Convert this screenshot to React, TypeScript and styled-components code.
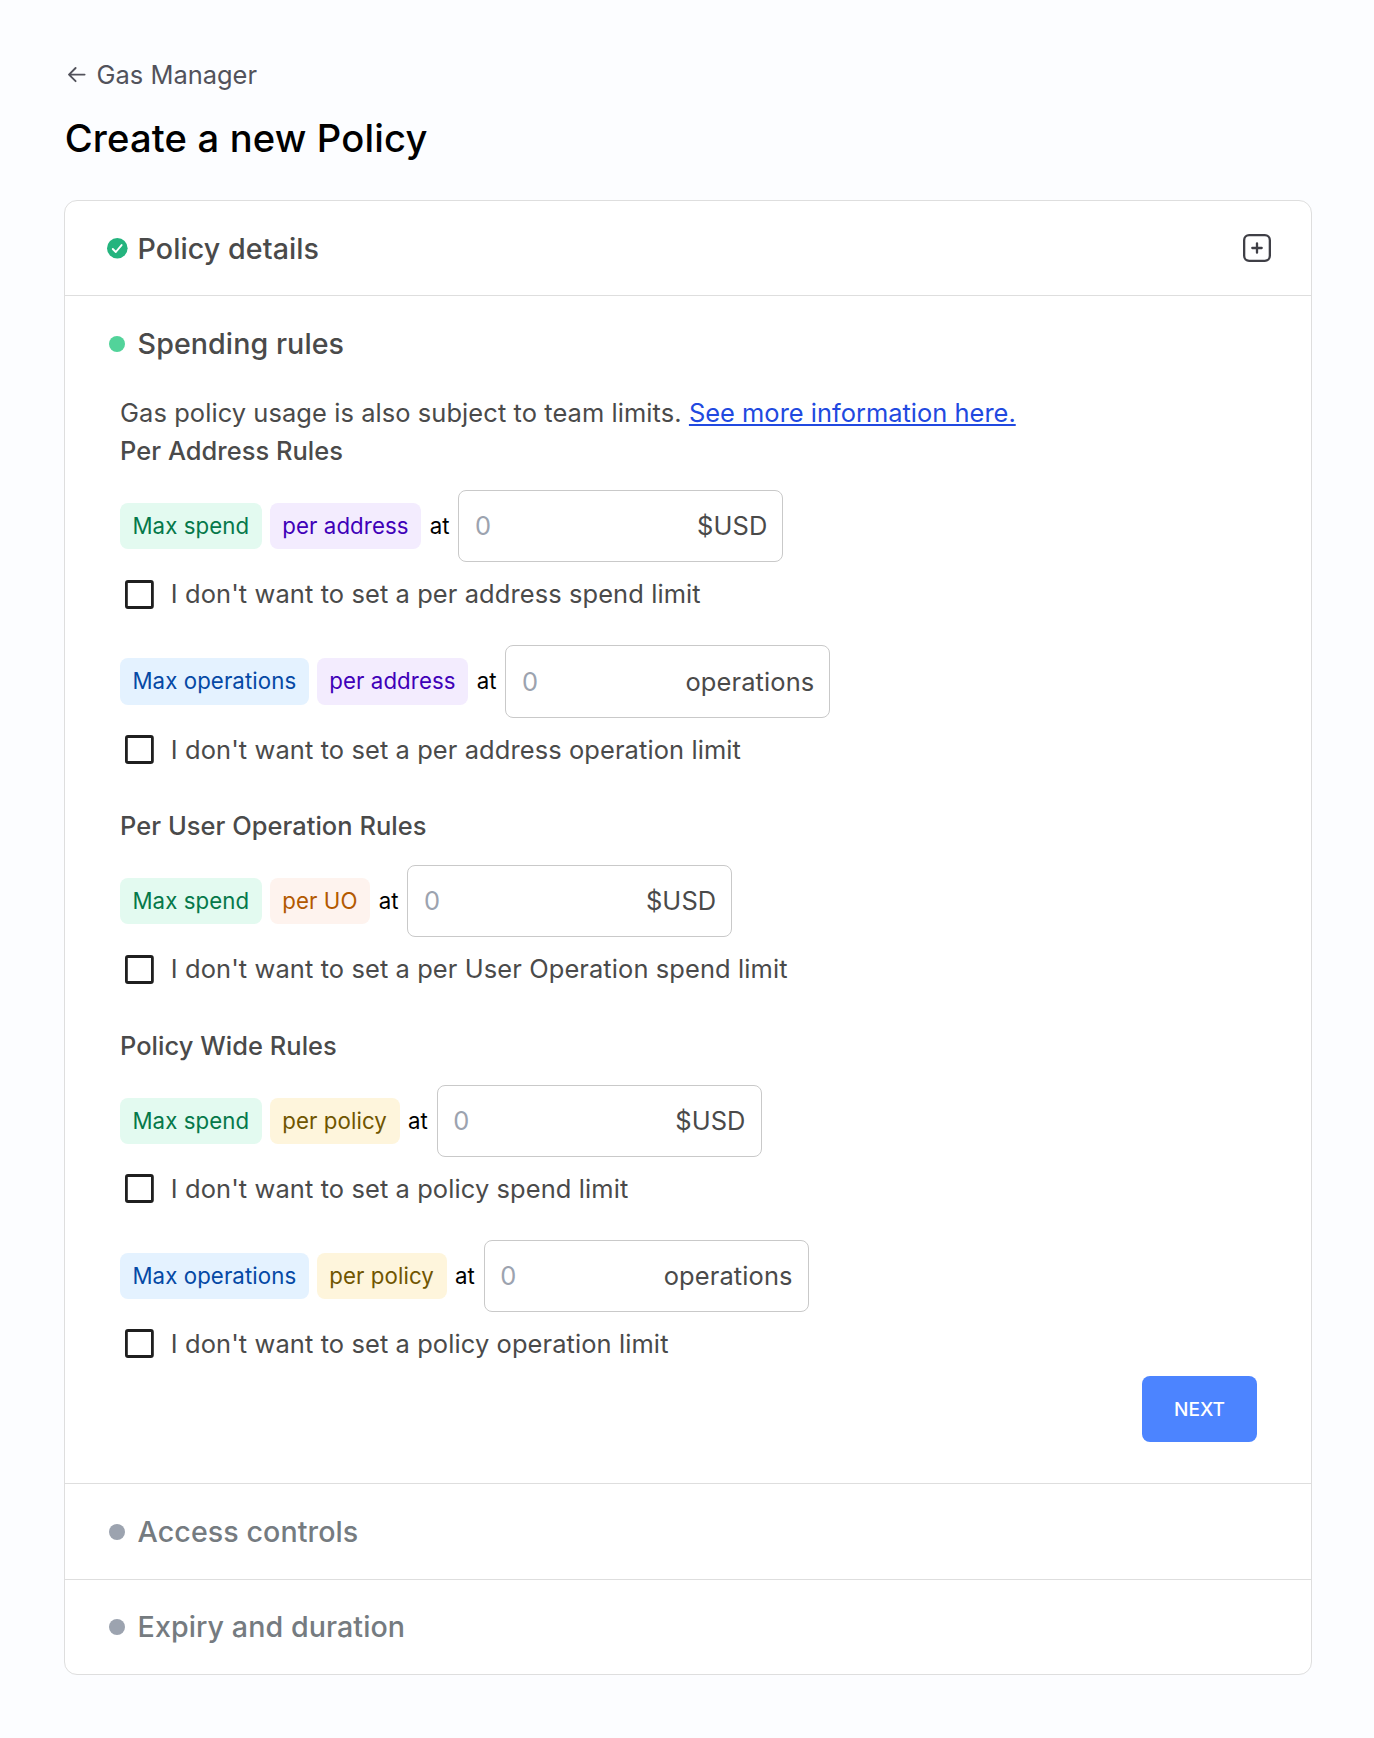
import React from "react";
import styled, { createGlobalStyle } from "styled-components";

const GlobalStyle = createGlobalStyle`
  *, *::before, *::after { box-sizing: border-box; }
  body {
    margin: 0;
    background: #fcfdff;
    font-family: Inter, "Liberation Sans", sans-serif;
    color: #4a4a4a;
  }
`;

const Page = styled.main`
  min-height: 1738px;
  padding: 55px 62px 63px 64px;
`;

const BackLink = styled.a`
  display: flex;
  align-items: center;
  gap: 9.6px;
  height: 38px;
  padding-left: 3px;
  color: #52525b;
  font-size: 25.44px;
  text-decoration: none;
`;

const PageTitle = styled.h1`
  margin: 18px 0 35px;
  padding-left: 0.7px;
  height: 54px;
  line-height: 54px;
  color: #000;
  font-size: 38.16px;
  font-weight: 500;
  letter-spacing: 0.16px;
`;

const Card = styled.div`
  border: 1px solid #dedede;
  border-radius: 13px;
  background: #fff;
`;

const Section = styled.section`
  & + & {
    border-top: 1px solid #dedede;
  }
`;

const SectionHeader = styled.header<{ $height: number; $top?: number }>`
  display: flex;
  align-items: center;
  height: ${(p) => p.$height}px;
  padding: ${(p) => p.$top ?? 0}px 40.5px 0 41.5px;
`;

const SectionTitle = styled.h2<{ $muted?: boolean }>`
  flex: 1;
  margin: 0 0 0 10.1px;
  color: ${(p) => (p.$muted ? "#757b80" : "#4a4a4a")};
  font-size: 28.62px;
  font-weight: 500;
  letter-spacing: 0.08px;
  line-height: 38px;
`;

const Marker = styled.span`
  display: flex;
  justify-content: center;
  width: 21px;
`;

const Dot = styled.span<{ $color: string }>`
  width: 16px;
  height: 16px;
  border-radius: 50%;
  background: ${(p) => p.$color};
`;

const ExpandButton = styled.button`
  display: flex;
  padding: 0 0 1.2px;
  border: 0;
  background: none;
  color: #3f3f46;
`;

const SectionBody = styled.div`
  padding: 3.3px 54px 41px 55px;
`;

const Note = styled.p`
  margin: 0;
  font-size: 25.44px;
  letter-spacing: 0.08px;
  line-height: 38px;
`;

const InfoLink = styled.a`
  color: #2149e0;
  letter-spacing: 0.01px;
  text-decoration: underline;
`;

const RuleGroup = styled.div`
  & + & {
    margin-top: 38.55px;
  }
`;

const GroupTitle = styled.h3`
  margin: 0 0 20px;
  font-size: 25.44px;
  font-weight: 500;
  letter-spacing: 0.04px;
  line-height: 38px;
`;

const Rule = styled.div`
  padding-bottom: 0.5px;

  & + & {
    margin-top: 32.05px;
  }
`;

const RuleLine = styled.div`
  display: flex;
  align-items: center;
  gap: 8px;
  height: 72.1px;
  color: #000;
  font-size: 22.26px;
  line-height: 46.4px;
`;

const tones = {
  green: ["#e3faf0", "#05784a"],
  blue: ["#e4f2ff", "#0549a5"],
  purple: ["#f3ecfe", "#3f00b8"],
  orange: ["#fef3ee", "#b35900"],
  yellow: ["#fef5dc", "#705500"],
};
type Tone = keyof typeof tones;

const Tag = styled.span<{ $tone: Tone }>`
  height: 46.2px;
  padding: 0 12.7px 0 12.4px;
  border-radius: 8px;
  background: ${(p) => tones[p.$tone][0]};
  color: ${(p) => tones[p.$tone][1]};
  letter-spacing: 0.08px;
`;

const AtLabel = styled.span`
  padding: 0 0.9px 0 0.4px;
`;

const Field = styled.label`
  display: flex;
  align-items: center;
  width: 325px;
  height: 72.1px;
  padding: 0 15px 0.8px 15.6px;
  border: 1px solid #c9c9c9;
  border-radius: 8px;
  background: #fff;
  color: #4a4a4a;
  font-size: 25.44px;
  letter-spacing: 0.12px;
  line-height: normal;
`;

const AmountInput = styled.input`
  flex: 1;
  min-width: 0;
  padding: 0;
  border: 0;
  outline: 0;
  background: none;
  font: inherit;
  color: inherit;

  &::placeholder {
    color: #9ca3af;
    opacity: 1;
  }
`;

const OptOut = styled.label`
  display: flex;
  align-items: center;
  gap: 12.8px;
  height: 38px;
  margin-top: 12.5px;
  font-size: 25.44px;
  letter-spacing: 0.1px;
`;

const Actions = styled.div`
  display: flex;
  justify-content: flex-end;
  margin-top: 12.7px;
`;

const NextButton = styled.button`
  width: 115px;
  height: 66px;
  padding: 1px 0 0;
  border: 0;
  border-radius: 8px;
  background: #4c84ff;
  color: #fff;
  font: 500 19.08px Inter, "Liberation Sans", sans-serif;
`;

const ArrowLeft = () => (
  <svg width="20" height="20" viewBox="0 0 20 20" fill="none" stroke="currentColor" strokeWidth="1.9" strokeLinecap="round" strokeLinejoin="round">
    <path d="M17.6 10.6H2M8.6 4L2 10.6L8.6 17.2" />
  </svg>
);

const CheckCircle = () => (
  <svg width="21" height="21" viewBox="0 0 21 21" fill="none">
    <circle cx="10.3" cy="10.3" r="10.3" fill="#24b47e" />
    <path d="M5.8 11L8.8 14L14.6 7.1" stroke="#fff" strokeWidth="1.9" strokeLinecap="round" strokeLinejoin="round" />
  </svg>
);

const PlusSquare = () => (
  <svg width="28" height="28" viewBox="0 0 28 28" fill="none" stroke="currentColor" strokeWidth="2.3" strokeLinecap="round">
    <rect x="1.15" y="1.15" width="25.7" height="25.7" rx="5" />
    <path d="M14 9.3V18.7M9.3 14H18.7" />
  </svg>
);

const EmptyBox = () => (
  <svg width="38" height="38" viewBox="0 0 38 38" fill="none" stroke="#1f1f1f" strokeWidth="2.8">
    <rect x="6.4" y="6.5" width="26" height="26" rx="1.6" />
  </svg>
);

type RuleData = { metric: string; metricTone: Tone; scope: string; scopeTone: Tone; unit: string; optOut: string };

const groups: { title: string; rules: RuleData[] }[] = [
  {
    title: "Per Address Rules",
    rules: [
      { metric: "Max spend", metricTone: "green", scope: "per address", scopeTone: "purple", unit: "$USD", optOut: "I don't want to set a per address spend limit" },
      { metric: "Max operations", metricTone: "blue", scope: "per address", scopeTone: "purple", unit: "operations", optOut: "I don't want to set a per address operation limit" },
    ],
  },
  {
    title: "Per User Operation Rules",
    rules: [
      { metric: "Max spend", metricTone: "green", scope: "per UO", scopeTone: "orange", unit: "$USD", optOut: "I don't want to set a per User Operation spend limit" },
    ],
  },
  {
    title: "Policy Wide Rules",
    rules: [
      { metric: "Max spend", metricTone: "green", scope: "per policy", scopeTone: "yellow", unit: "$USD", optOut: "I don't want to set a policy spend limit" },
      { metric: "Max operations", metricTone: "blue", scope: "per policy", scopeTone: "yellow", unit: "operations", optOut: "I don't want to set a policy operation limit" },
    ],
  },
];

export default function App() {
  return (
    <>
      <GlobalStyle />
      <Page>
        <BackLink>
          <ArrowLeft />
          Gas Manager
        </BackLink>
        <PageTitle>Create a new Policy</PageTitle>
        <Card>
          <Section>
            <SectionHeader $height={94} $top={1.2}>
              <Marker><CheckCircle /></Marker>
              <SectionTitle>Policy details</SectionTitle>
              <ExpandButton aria-label="Expand"><PlusSquare /></ExpandButton>
            </SectionHeader>
          </Section>
          <Section>
            <SectionHeader $height={95}>
              <Marker><Dot $color="#52d39a" /></Marker>
              <SectionTitle>Spending rules</SectionTitle>
            </SectionHeader>
            <SectionBody>
              <Note>
                Gas policy usage is also subject to team limits. <InfoLink>See more information here.</InfoLink>
              </Note>
              {groups.map((group) => (
                <RuleGroup key={group.title}>
                  <GroupTitle>{group.title}</GroupTitle>
                  {group.rules.map((rule) => (
                    <Rule key={rule.optOut}>
                      <RuleLine>
                        <Tag $tone={rule.metricTone}>{rule.metric}</Tag>
                        <Tag $tone={rule.scopeTone}>{rule.scope}</Tag>
                        <AtLabel>at</AtLabel>
                        <Field>
                          <AmountInput placeholder="0" />
                          {rule.unit}
                        </Field>
                      </RuleLine>
                      <OptOut>
                        <EmptyBox />
                        {rule.optOut}
                      </OptOut>
                    </Rule>
                  ))}
                </RuleGroup>
              ))}
              <Actions>
                <NextButton>NEXT</NextButton>
              </Actions>
            </SectionBody>
          </Section>
          <Section>
            <SectionHeader $height={95} $top={1}>
              <Marker><Dot $color="#9ca3af" /></Marker>
              <SectionTitle $muted>Access controls</SectionTitle>
            </SectionHeader>
          </Section>
          <Section>
            <SectionHeader $height={94}>
              <Marker><Dot $color="#9ca3af" /></Marker>
              <SectionTitle $muted>Expiry and duration</SectionTitle>
            </SectionHeader>
          </Section>
        </Card>
      </Page>
    </>
  );
}
